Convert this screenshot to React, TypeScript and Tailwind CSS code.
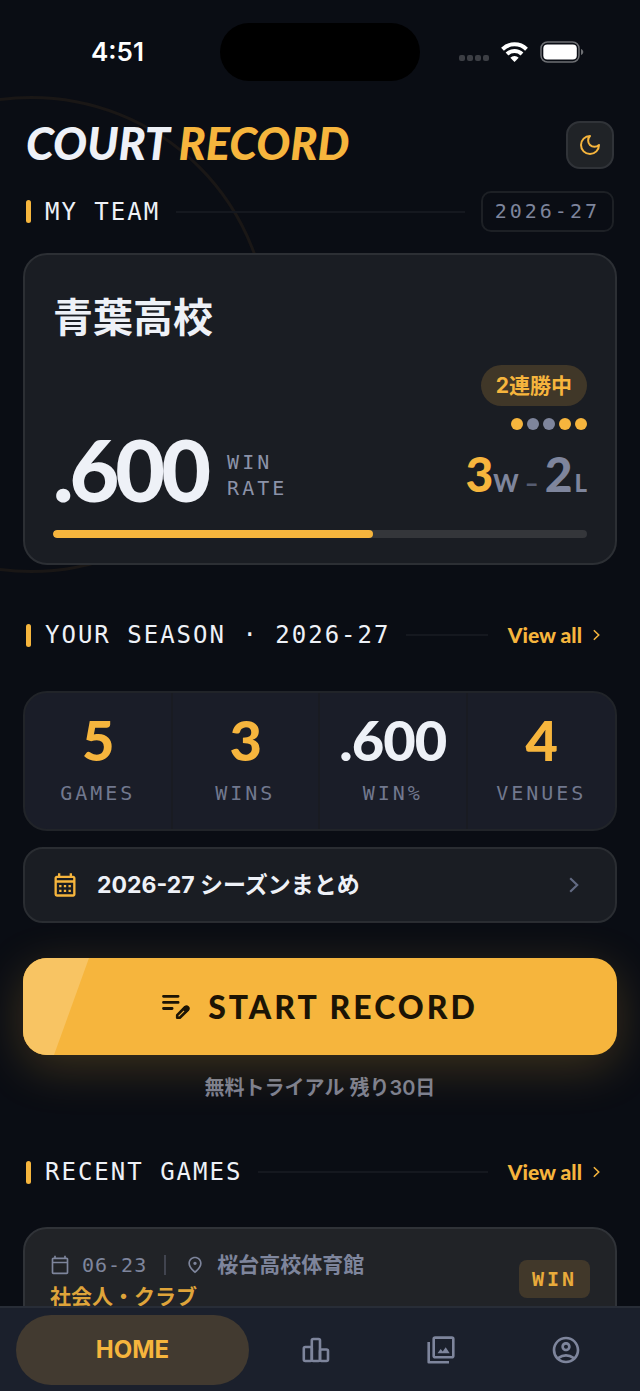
import type { ReactNode } from "react";
import {
  MdOutlineAccountCircle,
  MdOutlineCalendarMonth,
  MdOutlineCalendarToday,
  MdOutlinePlace,
} from "react-icons/md";

const display = "font-['Lato','Noto_Sans_CJK_JP',sans-serif]";
const mono = "font-['DejaVu_Sans_Mono',monospace]";

const stats = [
  { value: "5", label: "GAMES", accent: true },
  { value: "3", label: "WINS", accent: true },
  { value: ".600", label: "WIN%", accent: false },
  { value: "4", label: "VENUES", accent: true },
];

const form = ["W", "L", "L", "W", "W"];

function Moon() {
  return (
    <svg width="24" height="24" viewBox="0 0 24 24" fill="none" stroke="currentColor" strokeWidth="2" strokeLinejoin="round">
      <path d="M12 3a6 6 0 0 0 9 9 9 9 0 1 1-9-9Z" />
    </svg>
  );
}

function Chevron({ className }: { className: string }) {
  return (
    <svg className={className} viewBox="0 0 10 16" fill="none" stroke="currentColor" strokeWidth="2.2">
      <path d="m1.2 1.2 7 6.8-7 6.8" />
    </svg>
  );
}

function EditNote() {
  return (
    <svg width="28" height="26" viewBox="0 0 28 26" fill="none" stroke="#1c1405" strokeLinecap="round" strokeLinejoin="round">
      <path d="M1.5 2.3h14.6M1.5 8.4h14.6M1.5 14.5h8.6" strokeWidth="2.8" />
      <path d="m15.2 21.2 8-8.2a2 2 0 0 1 2.8 2.8l-8.2 8h-2.6Z" strokeWidth="2.6" />
      <path d="m21.4 15 1.8-1.8 2.7 2.6-1.8 1.8Z" fill="#1c1405" strokeWidth="2" />
    </svg>
  );
}

function Bars() {
  return (
    <svg width="28" height="26" viewBox="0 0 28 26" fill="none" stroke="currentColor" strokeWidth="2.6" strokeLinejoin="round">
      <rect x="1.8" y="10" width="8" height="14" rx="1.5" />
      <rect x="9.8" y="2" width="8.200" height="22" rx="1.500" />
      <rect x="18" y="12.500" width="8" height="11.500" rx="1.500" />
    </svg>
  );
}

function Photos() {
  return (
    <svg width="28" height="28" viewBox="0 0 28 28" fill="none" stroke="currentColor" strokeWidth="2.6" strokeLinejoin="round">
      <rect x="6.7" y="1.600" width="19.600" height="19.600" rx="1.500" />
      <path d="M1.700 6v20.300H22" />
      <path d="m10.500 17.200 3.200-4.200 2 2.500 3-4.200 4 5.900Z" fill="currentColor" stroke="none" />
    </svg>
  );
}

function StatusBar() {
  return (
    <div className="grid h-[81px] grid-cols-[1fr_200px_1fr] items-end">
      <span className="pb-[11px] pl-[91px] text-[26px] leading-9 font-semibold text-white">4:51</span>
      <div className="h-[58px] rounded-full bg-black" />
      <div className="flex items-center justify-end gap-3 pr-14 pb-[18px]">
        <div className="flex gap-[2px] pt-3">
          {[0, 1, 2, 3].map((i) => (
            <span key={i} className="size-[6px] rounded-[2px] bg-[#3c3e44]" />
          ))}
        </div>
        <svg width="27" height="20" viewBox="0 0 27 20" fill="none" stroke="white" strokeWidth="4">
          <path d="M1.500 7.200a17.200 17.200 0 0 1 24 0" />
          <path d="M6 12a10.800 10.800 0 0 1 15 0" />
          <path d="M13.500 20 9.300 15.800a6 6 0 0 1 8.400 0Z" fill="white" stroke="none" />
        </svg>
        <svg width="44" height="22" viewBox="0 0 44 22" fill="none">
          <rect x="1" y="1" width="38" height="20" rx="6.500" stroke="#6d6f73" strokeWidth="1.500" />
          <rect x="3.300" y="3.500" width="33.500" height="15" rx="4" fill="white" />
          <path d="M41 8c3 1 3 5 0 6Z" fill="#6d6f73" />
        </svg>
      </div>
    </div>
  );
}

function SectionTitle({ title, children }: { title: string; children: ReactNode }) {
  return (
    <div className="flex items-center px-[3px]">
      <span className="mr-[14px] h-[23px] w-[5px] rounded-full bg-[#f6b53d]" />
      <h2 className={`${mono} text-[24px] leading-8 tracking-[2px] text-[#eef1f7]`}>{title}</h2>
      <span className="mx-4 h-[2px] flex-1 bg-[#15181f]" />
      {children}
    </div>
  );
}

function ViewAll() {
  return (
    <a href="#" className={`${display} mr-[14px] ml-1 flex items-center text-[21px] leading-8 font-black text-[#f6b53d]`}>
      View all
      <Chevron className="ml-[11px] h-3 w-[7px]" />
    </a>
  );
}

export default function App() {
  return (
    <div className="relative h-screen overflow-hidden bg-[#0a0d14] font-['Inter','Noto_Sans_CJK_JP',sans-serif]">
      <div className="absolute top-[96px] -left-[207px] size-[477px] rounded-full border-3 border-[#1a1716]" />
      <div className="relative">
        <StatusBar />

        <main className="px-[23px] pt-10">
          <header className="flex items-center justify-between px-[3px]">
            <h1 className={`${display} pb-1 text-[45px] leading-11 font-black text-[#eef1f7] italic`}>
              COURT <span className="text-[#f6b53d]">RECORD</span>
            </h1>
            <button
              aria-label="Dark mode"
              className="flex size-12 items-center justify-center rounded-[14px] border-2 border-[#303338] bg-[#202327] text-[#f6b53d]"
            >
              <Moon />
            </button>
          </header>

          <section className="mt-[22px]">
            <SectionTitle title="MY TEAM">
              <span className={`${mono} rounded-[10px] border-2 border-[#1d2025] px-3 py-1 text-[20px] leading-[29px] tracking-[3px] text-[#7e859c]`}>
                2026-27
              </span>
            </SectionTitle>

            <div className="mt-[21px] rounded-3xl border-2 border-[#2c2f34] bg-[#1a1d23] px-7 pt-[34px] pb-[25px]">
              <h3 className="text-[40px] leading-[58px] font-bold text-[#eef1f7]">青葉高校</h3>
              <div className="mt-[18px] flex items-end justify-between">
                <div className="flex items-end pb-[6px]">
                  <span className={`${display} text-[86px] leading-[72px] font-black tracking-[-4px] text-[#eef1f7]`}>.600</span>
                  <span className={`${mono} mb-1 ml-5 text-[20px] leading-[26px] tracking-[3px] text-[#8b92a8]`}>
                    WIN
                    <br />
                    RATE
                  </span>
                </div>
                <div className="flex flex-col items-end">
                  <span className="rounded-full bg-[#403728] px-[15px] text-[21px] leading-[41px] font-bold text-[#f6b53d]">
                    2連勝中
                  </span>
                  <div className="mt-3 flex gap-1">
                    {form.map((result, i) => (
                      <span key={i} className={`size-3 rounded-full ${result === "W" ? "bg-[#f6b53d]" : "bg-[#7e859c]"}`} />
                    ))}
                  </div>
                  <div className={`${display} mt-5 mb-1 flex items-baseline leading-[48px] font-black text-[#7e859c]`}>
                    <span className="text-[48px] text-[#f6b53d]">3</span>
                    <span className="text-[24px]">W</span>
                    <span className="mx-[6px] text-[24px] text-[#565c70]">–</span>
                    <span className="text-[48px]">2</span>
                    <span className="ml-[2px] text-[24px]">L</span>
                  </div>
                </div>
              </div>
              <div className="mt-[19px] h-2 overflow-hidden rounded-full bg-[#34363a]">
                <div className="h-full w-3/5 rounded-full bg-[#f6b53d]" />
              </div>
            </div>
          </section>

          <section className="mt-[54px]">
            <SectionTitle title="YOUR SEASON · 2026-27">
              <ViewAll />
            </SectionTitle>

            <div className="mt-10 grid grid-cols-4 divide-x-2 divide-[#191b22] rounded-3xl border-2 border-[#212429] bg-[#1a1d28]">
              {stats.map((stat) => (
                <div key={stat.label} className="pt-[17px] pb-[22px] text-center">
                  <div className={`${display} text-[56px] leading-[60px] font-black tracking-[-1px] ${stat.accent ? "text-[#f6b53d]" : "text-[#eef1f7]"}`}>
                    {stat.value}
                  </div>
                  <div className={`${mono} mt-[9px] text-[20px] leading-7 tracking-[3px] text-[#71788e]`}>{stat.label}</div>
                </div>
              ))}
            </div>

            <a
              href="#"
              className="mt-4 flex h-[76px] items-center rounded-[20px] border-2 border-[#2a2d32] bg-[#1a1d23] pr-9 pl-[26px] text-[23px] leading-8 font-bold text-[#eef1f7]"
            >
              <MdOutlineCalendarMonth className="mr-[18px] size-7 text-[#f6b53d]" />
              2026-27 シーズンまとめ
              <Chevron className="ml-auto h-4 w-[10px] text-[#626a82]" />
            </a>

            <button
              className={`${display} relative mt-[35px] flex h-[97px] w-full items-center justify-center gap-[18px] rounded-3xl bg-[#f6b53d] text-[32px] font-black tracking-[3px] text-[#1c1405] shadow-[0_12px_48px_rgba(246,181,61,0.22)]`}
            >
              <svg className="absolute inset-y-0 left-0 h-full w-[66px] rounded-l-3xl" viewBox="0 0 66 97" preserveAspectRatio="none">
                <path d="M0 0h66L31 97H0Z" fill="#f8c463" />
              </svg>
              <EditNote />
              START RECORD
            </button>
            <p className="mt-[17px] text-center text-[20px] leading-8 font-semibold text-[#7a7f92]">無料トライアル 残り30日</p>
          </section>

          <section className="mt-[52px]">
            <SectionTitle title="RECENT GAMES">
              <ViewAll />
            </SectionTitle>

            <article className="mt-[39px] flex h-40 justify-between rounded-3xl border-2 border-[#303338] bg-[#212327] px-[25px] pt-5">
              <div>
                <div className="flex items-center text-[#7e859c]">
                  <MdOutlineCalendarToday className="mr-3 size-5" />
                  <time className={`${mono} text-[20px] leading-8 tracking-[1px]`}>06-23</time>
                  <span className="mr-[19px] ml-[17px] h-5 w-[2px] bg-[#41444f]" />
                  <MdOutlinePlace className="mr-3 size-5" />
                  <span className="text-[21px] leading-8 font-semibold">桜台高校体育館</span>
                </div>
                <p className="text-[21px] leading-8 font-bold text-[#dfa43a]">社会人・クラブ</p>
              </div>
              <span className={`${mono} mt-[11px] h-[38px] rounded-[8px] bg-[#41382a] px-[13px] text-[20px] leading-[38px] font-bold tracking-[3px] text-[#e8ab3b]`}>
                WIN
              </span>
            </article>
          </section>
        </main>
      </div>

      <nav className="fixed inset-x-0 bottom-0 flex h-[85px] items-center border-t-2 border-[#282d37] bg-[#1b202c] pr-3 pl-4 text-[#7e859c]">
        <a href="#" className="flex h-[70px] w-[233px] items-center justify-center rounded-full bg-[#423a30] text-[24px] font-bold text-[#f6b53d]">
          HOME
        </a>
        <div className="ml-1 flex flex-1 items-center">
          <a href="#" aria-label="Stats" className="flex flex-1 justify-center">
            <Bars />
          </a>
          <a href="#" aria-label="Photos" className="flex flex-1 justify-center">
            <Photos />
          </a>
          <a href="#" aria-label="Account" className="flex flex-1 justify-center">
            <MdOutlineAccountCircle className="size-8" />
          </a>
        </div>
      </nav>
    </div>
  );
}
